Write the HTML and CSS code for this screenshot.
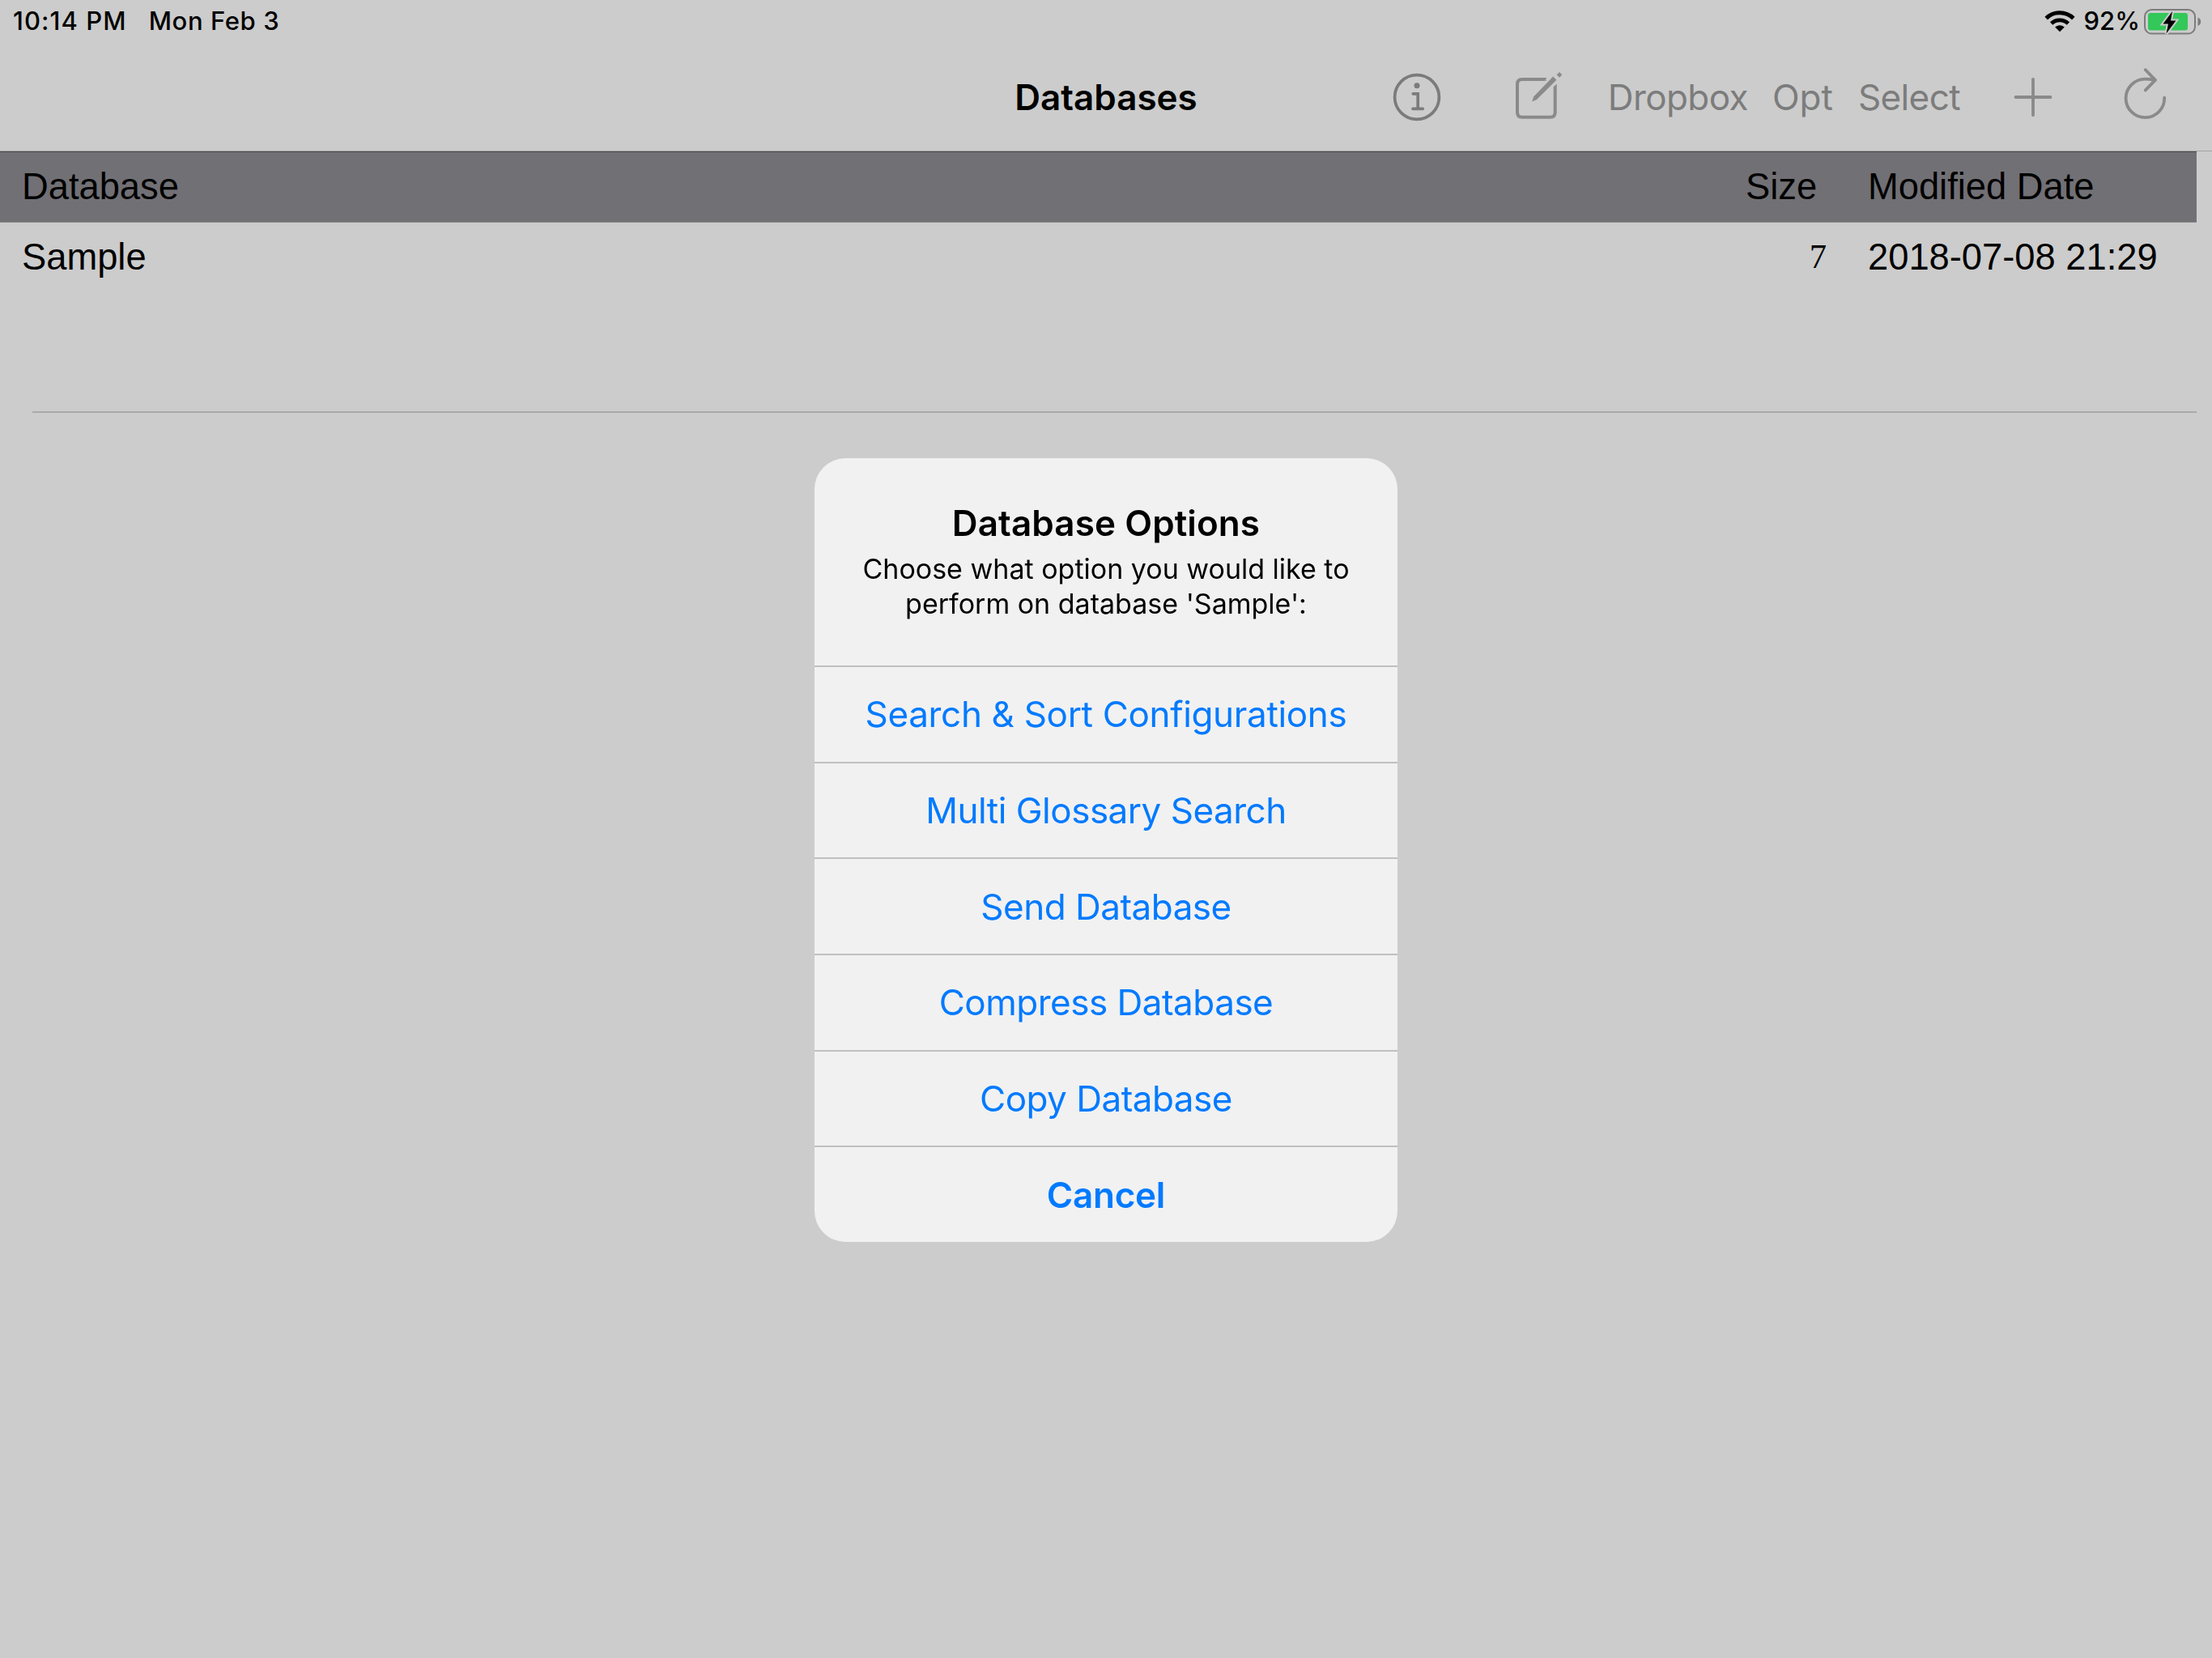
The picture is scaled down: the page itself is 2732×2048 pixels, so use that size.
FILE: index.html
```
<!DOCTYPE html>
<html lang="en">
<head>
    <meta charset="UTF-8">
    <meta name="viewport" content="width=device-width, initial-scale=1.0">
    <title>Databases</title>
    <link rel="stylesheet" href="styles.css">
</head>
<body>
    <div class="status-bar">
        <span class="time">10:14 PM</span>
        <span class="date">Mon Feb 3</span>
        <svg class="wifi" width="38" height="28" viewBox="0 0 38 28">
            <path d="M2.2 10.6 A24 24 0 0 1 35.8 10.6" fill="none" stroke="#000" stroke-width="5"/>
            <path d="M8.6 17 A15 15 0 0 1 29.4 17" fill="none" stroke="#000" stroke-width="4.8"/>
            <path d="M13.2 21.6 Q19 17 24.8 21.6 L19 27.2 Z" fill="#000"/>
        </svg>
        <span class="percent">92%</span>
        <svg class="battery" width="74" height="36" viewBox="0 0 74 36">
            <rect x="2" y="3" width="62" height="29.6" rx="8.5" fill="none" stroke="#7c7c7c" stroke-width="2"/>
            <rect x="6" y="7" width="49" height="21.4" rx="3" fill="#34c759"/>
            <path d="M67.5 12.5 Q71.2 14 71.2 17.8 Q71.2 21.5 67.5 23 Z" fill="#7c7c7c"/>
            <path d="M36 5 L24.5 20.4 L31 20.4 L28.5 32.5 L40.5 16.5 L34 16.5 Z" fill="#000" stroke="#ccc" stroke-width="4" paint-order="stroke"/>
        </svg>
    </div>

    <div class="nav-bar">
        <h1>Databases</h1>
        <div class="toolbar">
            <svg class="icon-info" width="60" height="60" viewBox="0 0 60 60">
                <circle cx="30" cy="30" r="27.4" fill="none" stroke="#7b7b7b" stroke-width="3.7"/>
                <circle cx="30" cy="15.7" r="3.5" fill="#7b7b7b"/>
                <path d="M25.3 25.8 H31.2 V44.3 M25 44.3 H37.2" fill="none" stroke="#7b7b7b" stroke-width="3.7" stroke-linecap="round"/>
            </svg>
            <svg class="icon-compose" width="60" height="72" viewBox="0 0 60 72">
                <path d="M40 14 H10 Q4 14 4 20 V54.7 Q4 60.7 10 60.7 H44.7 Q50.7 60.7 50.7 54.7 V25" fill="none" stroke="#8a8a8a" stroke-width="4"/>
                <path d="M37 17 L41.5 11 H44 Z" fill="#ccc"/>
                <path d="M48.2 10.6 L52.4 14.8 L28 39 L22.2 41.6 L24.3 35.3 Z" fill="#8a8a8a"/>
                <path d="M48.7 25 V23.5 L52.7 19.5 V25 Z" fill="#8a8a8a"/>
                <path d="M53.2 8.6 L55.8 5.6 L58.8 8.2 L56.2 11.3 Z" fill="#8a8a8a" stroke="#8a8a8a" stroke-linejoin="round"/>
            </svg>
            <span class="tool dropbox">Dropbox</span>
            <span class="tool opt">Opt</span>
            <span class="tool select">Select</span>
            <svg class="icon-plus" width="48" height="50" viewBox="0 0 48 50">
                <path d="M24 2.8 V47.2 M2.5 25 H45.5" fill="none" stroke="#8a8a8a" stroke-width="3.8" stroke-linecap="round"/>
            </svg>
            <svg class="icon-refresh" width="54" height="72" viewBox="0 0 54 72">
                <path d="M51.2 36.6 A23.8 23.8 0 1 1 27.5 13.6 Q33 13.6 38.5 14.9 M27.8 2.2 L40 14.9 L27.8 27.4" fill="none" stroke="#8a8a8a" stroke-width="3.8" stroke-linecap="round" stroke-linejoin="round"/>
            </svg>
        </div>
    </div>

    <div class="table">
        <div class="table-head">
            <span>Database</span>
            <span>Size</span>
            <span>Modified Date</span>
        </div>
        <div class="table-row">
            <span>Sample</span>
            <span class="size">7</span>
            <span>2018-07-08 21:29</span>
        </div>
    </div>

    <div class="overlay">
        <div class="alert">
            <div class="alert-head">
                <h2>Database Options</h2>
                <p>Choose what option you would like to<br>perform on database 'Sample':</p>
            </div>
            <button class="search-sort">Search &amp; Sort Configurations</button>
            <button>Multi Glossary Search</button>
            <button>Send Database</button>
            <button>Compress Database</button>
            <button>Copy Database</button>
            <button class="cancel">Cancel</button>
        </div>
    </div>
</body>
</html>
```
FILE: styles.css
```
* {
    box-sizing: border-box;
}
body {
    margin: 0;
    height: 2048px;
    overflow: hidden;
    background-color: #ccc;
    color: #000;
    font-family: Inter, sans-serif;
}
svg {
    display: block;
    flex: none;
}

/* status bar */
.status-bar {
    display: flex;
    align-items: center;
    height: 53px;
    padding: 0 11px 1px 16px;
    font-size: 31px;
    font-weight: 500;
    line-height: 40px;
    white-space: nowrap;
}
.time {
    letter-spacing: 1.1px;
}
.date {
    margin-left: 27px;
    letter-spacing: 0.6px;
}
.wifi {
    margin-left: auto;
}
.percent {
    margin-left: 11px;
}
.battery {
    margin-left: 4px;
    margin-top: 1px;
}

/* navigation bar */
.nav-bar {
    display: grid;
    grid-template-columns: 1fr auto 1fr;
    align-items: center;
    height: 134px;
    padding: 1px 56px 0;
    border-bottom: 1px solid #a3a3a3;
}
h1 {
    grid-column: 2;
    margin: 0;
    font-size: 44px;
    font-weight: 600;
    line-height: 54px;
}
.toolbar {
    display: flex;
    justify-content: flex-end;
    align-items: center;
    color: #7c7c7c;
}
.tool {
    font-size: 44px;
    line-height: 54px;
    letter-spacing: -0.6px;
}
.icon-compose {
    margin-left: 90px;
}
.dropbox {
    margin-left: 56px;
}
.opt {
    margin-left: 30px;
    letter-spacing: 0;
}
.select {
    margin-left: 31px;
}
.icon-plus {
    margin-left: 66px;
}
.icon-refresh {
    margin-left: 87px;
}

/* database list */
.table {
    width: 2713px;
    font-family: "Liberation Sans", Arial, sans-serif;
    font-size: 45.3px;
    line-height: 52px;
}
.table-head,
.table-row {
    display: grid;
    grid-template-columns: 2129px 151px 1fr;
    padding-left: 27px;
}
.table-head {
    height: 88px;
    padding-top: 17px;
    background-color: #717075;
    border-top: 1px solid #49494b;
    border-bottom: 1px solid #8b8b8d;
}
.table-row {
    height: 233px;
    padding-top: 17px;
}
.table::after {
    content: "";
    display: block;
    height: 2px;
    margin-left: 40px;
    background-color: #a9a9a9;
}
.size {
    padding-right: 51px;
    text-align: right;
    font-family: "Liberation Serif", "Times New Roman", serif;
    font-size: 42.7px;
    line-height: 50px;
}

/* alert */
.overlay {
    position: fixed;
    inset: 0;
    display: flex;
    justify-content: center;
    align-items: flex-start;
    padding-top: 566px;
}
.alert {
    width: 720px;
    overflow: hidden;
    border-radius: 38px;
    background-color: #f1f1f1;
    text-align: center;
}
.alert-head {
    height: 256px;
    padding-top: 53px;
}
h2 {
    margin: 0 0 8px;
    font-size: 44px;
    font-weight: 600;
    line-height: 54px;
    letter-spacing: 0.1px;
}
p {
    margin: 0;
    font-size: 34px;
    line-height: 43.3px;
}
button {
    display: block;
    width: 100%;
    height: 118.66px;
    padding: 0;
    border: none;
    border-top: 2px solid #c0c0c1;
    background: none;
    color: #007aff;
    font-family: inherit;
    font-size: 44px;
    line-height: 54px;
    letter-spacing: -0.5px;
}
.search-sort {
    letter-spacing: -0.33px;
}
.cancel {
    font-weight: 600;
    letter-spacing: -0.25px;
}
```
